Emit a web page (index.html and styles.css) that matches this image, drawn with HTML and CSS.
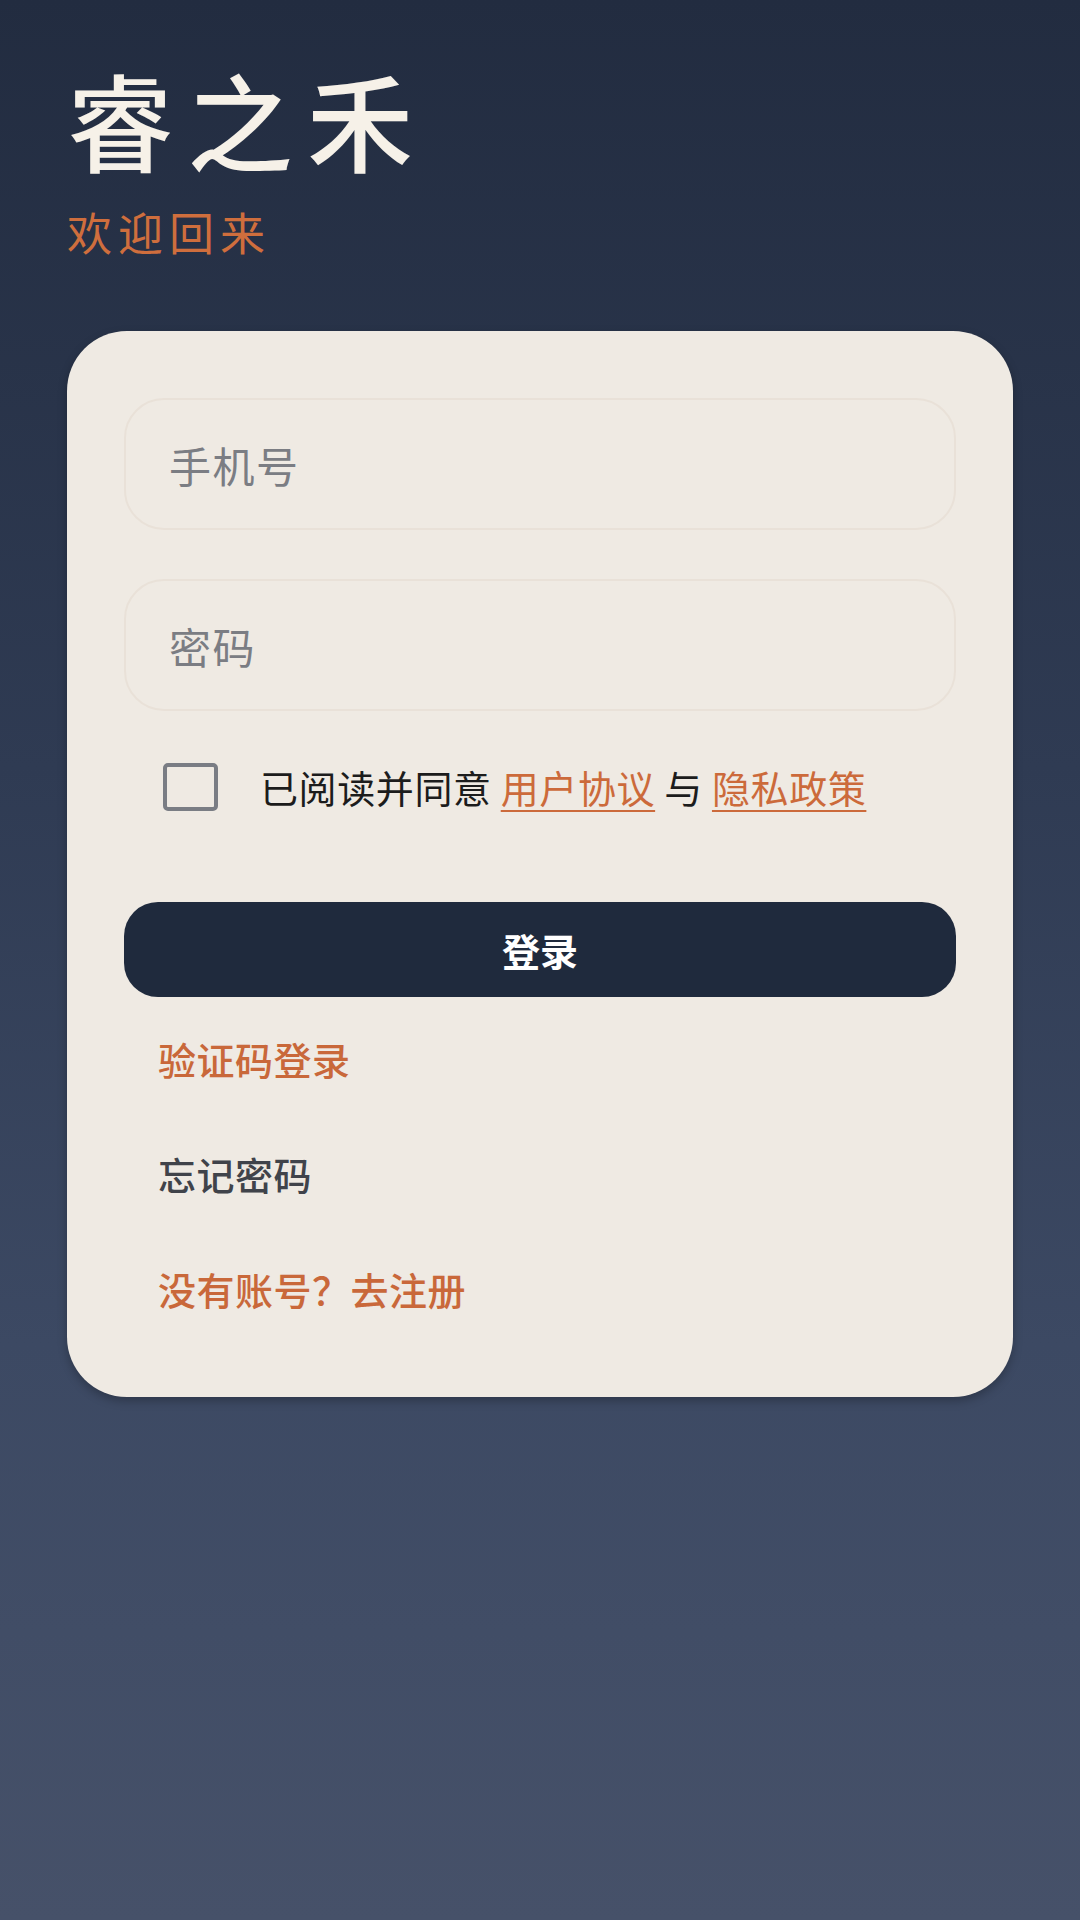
FILE: index.html
```html
<!DOCTYPE html>
<html lang="zh-CN">
<head>
<meta charset="utf-8">
<title>睿之禾 - 登录</title>
<link rel="stylesheet" href="styles.css">
</head>
<body>
<main class="page">
  <h1 class="brand">睿之禾</h1>
  <p class="welcome">欢迎回来</p>
  <section class="card">
    <input class="field" type="tel" placeholder="手机号">
    <input class="field field-gap" type="password" placeholder="密码">
    <label class="agree">
      <span class="checkbox"></span>
      <span class="agree-text">已阅读并同意 <a class="doc-link">用户协议</a> 与 <a class="doc-link">隐私政策</a></span>
    </label>
    <button class="login-btn" type="button">登录</button>
    <nav class="links">
      <a class="link link-accent">验证码登录</a>
      <a class="link link-muted">忘记密码</a>
      <a class="link link-accent">没有账号？去注册</a>
    </nav>
  </section>
</main>
</body>
</html>
```

FILE: styles.css
```css
* { box-sizing: border-box; }
html, body { margin: 0; padding: 0; }
body {
  font-family: "Noto Sans CJK SC", "Noto Sans", sans-serif;
  background: linear-gradient(180deg, #222c40 0%, #2f3b53 40%, #3c4963 70%, #465169 100%);
  min-height: 1920px;
}
.page {
  padding: 66px 67px 0;
  min-height: 1920px;
}
.brand {
  margin: 0;
  font-size: 106px;
  line-height: 104px;
  font-weight: 500;
  letter-spacing: 14px;
  color: #f6f1e8;
}
.welcome {
  margin: 40px 0 0;
  font-size: 45px;
  line-height: 44px;
  letter-spacing: 6px;
  color: #cf6e3d;
}
.card {
  margin-top: 77px;
  background: #efeae3;
  border-radius: 60px;
  padding: 67px 57px 78px;
  display: flex;
  flex-direction: column;
  box-shadow: 0 4px 10px rgba(0, 0, 0, 0.25);
}
.field {
  display: block;
  width: 100%;
  height: 132px;
  border: 2px solid #e9e1d8;
  border-radius: 40px;
  background: #efeae3;
  padding: 0 43px;
  font-family: inherit;
  font-size: 42px;
  letter-spacing: 1.5px;
  color: #333;
  outline: none;
}
.field::placeholder { color: #7b7d83; }
.field-gap { margin-top: 49px; }
.agree {
  margin-top: 52px;
  height: 48px;
  display: flex;
  align-items: center;
  padding-left: 39px;
}
.checkbox {
  width: 55px;
  height: 48px;
  border: 4px solid #7a7d84;
  border-radius: 5px;
  flex: none;
}
.agree-text {
  margin-left: 42px;
  font-size: 38px;
  line-height: 48px;
  letter-spacing: 0.6px;
  color: #1c1c1c;
}
.doc-link {
  color: #cc6a3b;
  text-decoration: underline;
  text-decoration-thickness: 2px;
  text-underline-offset: 7px;
}
.login-btn {
  margin-top: 91px;
  height: 95px;
  width: 100%;
  border: none;
  border-radius: 34px;
  background: #1f2a3d;
  color: #ffffff;
  font-family: inherit;
  font-size: 38px;
  font-weight: 600;
}
.links {
  margin-top: 32px;
  display: flex;
  flex-direction: column;
  gap: 55px;
  padding-left: 34px;
}
.link {
  font-size: 38px;
  line-height: 60px;
  font-weight: 500;
  letter-spacing: 0.5px;
}
.link-accent { color: #c9683a; }
.link-muted { color: #40434a; }
```
